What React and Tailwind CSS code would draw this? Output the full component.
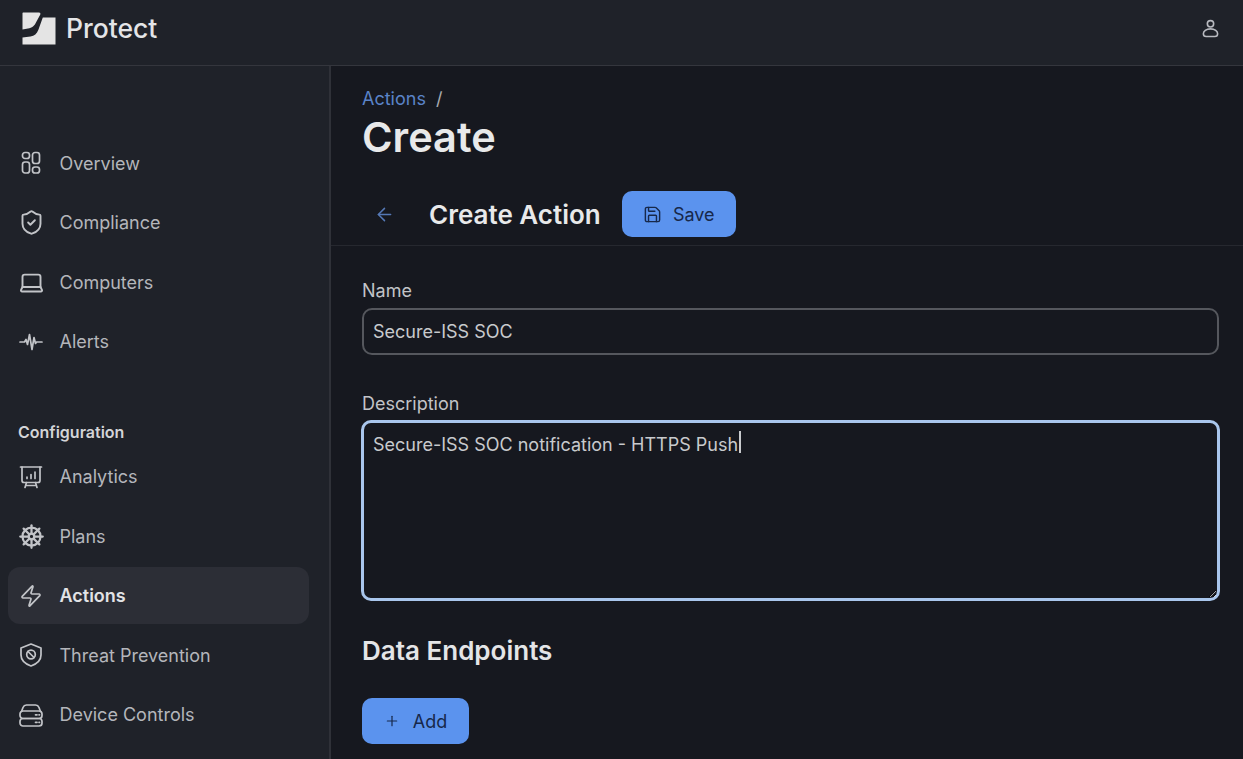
import React from "react";
import { ArrowLeft, Laptop, Plus, Save, ShieldCheck, ShipWheel, Zap } from "lucide-react";

const Logo = () => (
  <svg width="34" height="33" viewBox="0 0 34 33" fill="#e4e4e4">
    <path d="M1 0.500 H17 Q19 0.500 18.300 2.500 L14.500 9.500 C12.500 14 10 16 6 16.500 L0.500 17.500 V1 Z" />
    <path d="M20.800 5.500 H33.500 V32.500 H0.500 V25.500 L8.500 24.500 C12.500 24 14.800 21.500 16.300 18 Z" />
  </svg>
);

const OverviewIcon = (props) => (
  <svg viewBox="0 0 24 24" fill="none" stroke="currentColor" strokeWidth="1.8" {...props}>
    <rect x="3.500" y="1.500" width="7" height="6" rx="2.500" />
    <rect x="13.500" y="1.500" width="7" height="11" rx="2.500" />
    <rect x="3.500" y="11" width="7" height="11" rx="2.500" />
    <rect x="13.500" y="16" width="7" height="6" rx="2.500" />
  </svg>
);

const ComplianceIcon = ({ className, ...props }) => (
  <ShieldCheck {...props} className="-mx-[1.500px] h-[27px] w-[27px] shrink-0 text-[#c2c4c8]" />
);

const ComputerIcon = ({ className, ...props }) => (
  <Laptop {...props} className="-mx-[1.500px] h-[27px] w-[27px] shrink-0 text-[#c2c4c8]" />
);

const PlansIcon = ({ className, ...props }) => (
  <ShipWheel {...props} strokeWidth={2} className="-mx-[1.500px] h-[27px] w-[27px] shrink-0 text-[#c2c4c8]" />
);

const WaveIcon = (props) => (
  <svg viewBox="0 0 24 24" fill="none" stroke="currentColor" strokeWidth="1.7" strokeLinecap="round" strokeLinejoin="round" {...props}>
    <path d="M1 12h4.500l1.500-2.500 1.500 5 2-10 2.500 15 2-12 1.500 6 1-1.500H23" />
  </svg>
);

const AnalyticsIcon = (props) => (
  <svg viewBox="0 0 24 24" fill="none" stroke="currentColor" strokeWidth="1.7" strokeLinecap="round" strokeLinejoin="round" {...props}>
    <path d="M1.500 2h21" />
    <path d="M3 2v13.500a2 2 0 0 0 2 2h14a2 2 0 0 0 2-2V2" />
    <path d="M8 13.500V12M12 13.500v-4M16 13.500V7" />
    <path d="M7.500 17.500 6 22.500M16.500 17.500 18 22.500M6.500 20.500h11" />
  </svg>
);

const ThreatIcon = (props) => (
  <svg viewBox="0 0 24 24" fill="none" stroke="currentColor" strokeWidth="1.800" strokeLinecap="round" strokeLinejoin="round" {...props}>
    <path d="M12 1 2 5v7c0 5.500 4.500 9 10 11 5.500-2 10-5.500 10-11V5z" />
    <circle cx="12" cy="11.500" r="4.300" />
    <path d="m9 8.500 6 6" />
  </svg>
);

const DeviceIcon = (props) => (
  <svg viewBox="0 0 24 24" fill="none" stroke="currentColor" strokeWidth="1.800" strokeLinecap="round" {...props}>
    <path d="M2.500 8.500 4 4.500A4 4 0 0 1 7.500 2h9A4 4 0 0 1 20 4.500l1.500 4" />
    <rect x="1" y="8" width="22" height="7.500" rx="3" />
    <rect x="1" y="15.500" width="22" height="7.500" rx="3" />
    <path d="M16.500 11.800h1.500M20 11.800h.5M16.500 19.300h1.500M20 19.300h.5" />
  </svg>
);

const UserIcon = (props) => (
  <svg viewBox="0 0 24 24" fill="none" stroke="currentColor" strokeWidth="2" {...props}>
    <circle cx="12" cy="6" r="4" />
    <path d="M12 12.500c-5.500 0-9 3-9 6 0 2 1.500 3.500 3.500 3.500h11c2 0 3.500-1.500 3.500-3.500 0-3-3.500-6-9-6z" />
  </svg>
);

const NavItem = ({ icon: Icon, label, active }) => (
  <a
    className={
      "flex h-[57px] items-center rounded-xl pl-[11px] text-[18px] " +
      (active ? "bg-[#2c2e36] font-semibold text-[#e2e3e6]" : "text-[#b4b6bb]")
    }
  >
    <Icon className="h-6 w-6 shrink-0 text-[#c2c4c8]" strokeWidth={1.7} />
    <span className="ml-[16.500px]">{label}</span>
  </a>
);

export default function App() {
  return (
    <div className="flex h-[759px] flex-col overflow-hidden bg-[#16181f] font-['Inter',sans-serif]">
      <header className="flex h-[66px] shrink-0 items-center justify-between border-b border-[#34363d] bg-[#1f2229] pl-[22px] pr-[23px]">
        <div className="flex items-center gap-[10px] pb-[8px]">
          <Logo />
          <span className="text-[26.500px] font-medium text-[#e4e5e7]">Protect</span>
        </div>
        <UserIcon className="mb-[9px] h-[19px] w-[19px] text-[#b8bac0]" />
      </header>

      <div className="flex min-h-0 flex-1">
        <aside className="w-[331px] shrink-0 border-r-2 border-[#2f3138] bg-[#1f2229] pl-[8px] pr-[20px] pt-[68.500px]">
          <nav className="flex flex-col gap-[2.500px]">
            <NavItem icon={OverviewIcon} label="Overview" />
            <NavItem icon={ComplianceIcon} label="Compliance" />
            <NavItem icon={ComputerIcon} label="Computers" />
            <NavItem icon={WaveIcon} label="Alerts" />
          </nav>
          <div className="mb-[4.500px] mt-[49.500px] pl-[10px] text-[16px] font-semibold leading-[24px] text-[#d3d4d7]">Configuration</div>
          <nav className="flex flex-col gap-[2.500px]">
            <NavItem icon={AnalyticsIcon} label="Analytics" />
            <NavItem icon={PlansIcon} label="Plans" />
            <NavItem icon={Zap} label="Actions" active />
            <NavItem icon={ThreatIcon} label="Threat Prevention" />
            <NavItem icon={DeviceIcon} label="Device Controls" />
          </nav>
        </aside>

        <main className="min-w-0 flex-1">
          <div className="px-[31px] pt-[21px]">
            <div className="flex gap-[10px] text-[18px] leading-[24px]">
              <span className="text-[#5a83c8]">Actions</span>
              <span className="text-[#a9abb0]">/</span>
            </div>
            <h1 className="text-[41.500px] font-semibold leading-[52px] text-[#e8e9ea]">Create</h1>
          </div>

          <div className="mt-[24px] flex h-[59px] items-center border-b border-[#26282f] pb-[4px] pl-[43px]">
            <ArrowLeft className="h-[21px] w-[21px] text-[#5578b5]" strokeWidth={1.7} />
            <h2 className="ml-[34px] text-[26px] font-semibold text-[#e8e9ea]">Create Action</h2>
            <button className="ml-[21px] flex h-[46px] w-[114px] items-center justify-center gap-[11px] rounded-[10px] bg-[#5b93ee] text-[18px] text-[#17284a]">
              <Save className="h-[19px] w-[19px]" strokeWidth={1.8} />
              Save
            </button>
          </div>

          <div className="px-[31px] pt-[32px]">
            <label className="block text-[18px] leading-[26px] text-[#c2c4c8]">Name</label>
            <input
              readOnly
              value="Secure-ISS SOC"
              className="mt-[4px] block h-[47px] w-[857px] rounded-[10px] border-2 border-[#55575d] bg-transparent px-[9px] text-[18px] text-[#c8cacd] outline-none"
            />

            <label className="mt-[36px] block text-[18px] leading-[26px] text-[#c2c4c8]">Description</label>
            <div className="relative -ml-[1px] mt-[3px] h-[181px] w-[859px]">
              <textarea
                readOnly
                value="Secure-ISS SOC notification - HTTPS Push"
                className="block h-full w-full rounded-[10px] border-[3px] border-[#a9c6ec] bg-transparent px-[9px] py-[8px] text-[18px] leading-[28px] text-[#c8cacd] outline-none"
              />
              <span className="absolute left-[378px] top-[11px] h-[22px] w-[2px] bg-[#c8cacd]" />
            </div>

            <h3 className="mt-[32px] text-[26px] font-semibold leading-[36px] text-[#e4e5e7]">Data Endpoints</h3>
            <button className="mt-[29px] flex h-[46px] w-[107px] items-center justify-center gap-[13px] rounded-[10px] bg-[#5b93ee] text-[18px] text-[#17284a]">
              <Plus className="h-[16px] w-[16px]" strokeWidth={1.8} />
              Add
            </button>
          </div>
        </main>
      </div>
    </div>
  );
}
